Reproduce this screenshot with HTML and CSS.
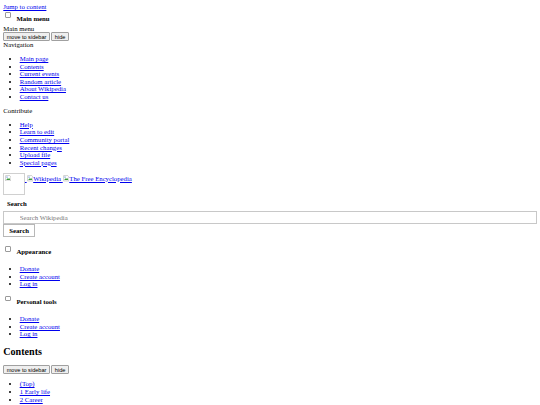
FILE: index.html
```
<!DOCTYPE html>
<html lang="en">
<head>
<meta charset="utf-8">
<title>Wikipedia</title>
<link rel="stylesheet" href="styles.css">
</head>
<body>
<a class="jump-link" href="#content">Jump to content</a>
<div class="dropdown">
  <input type="checkbox" class="dropdown-checkbox" aria-label="Main menu">
  <span class="dropdown-label">Main menu</span>
</div>
<div class="pinnable-header">
  <div>Main menu</div>
  <div class="pin-buttons"><button type="button">move to sidebar</button> <button type="button">hide</button></div>
</div>
<div class="portlet">
  <div class="portlet-heading">Navigation</div>
  <ul>
    <li><a href="#">Main page</a></li>
    <li><a href="#">Contents</a></li>
    <li><a href="#">Current events</a></li>
    <li><a href="#">Random article</a></li>
    <li><a href="#">About Wikipedia</a></li>
    <li><a href="#">Contact us</a></li>
  </ul>
</div>
<div class="portlet">
  <div class="portlet-heading">Contribute</div>
  <ul>
    <li><a href="#">Help</a></li>
    <li><a href="#">Learn to edit</a></li>
    <li><a href="#">Community portal</a></li>
    <li><a href="#">Recent changes</a></li>
    <li><a href="#">Upload file</a></li>
    <li><a href="#">Special pages</a></li>
  </ul>
</div>
<a class="home" href="#"><span class="logo-box"><svg class="broken" viewBox="0 0 16 16"><path d="M1.5 1.5h10l3 3v10h-13z" fill="#fff" stroke="#8a8a8a"/><path d="M3 12l3-4 2 2 2-3 3 5z" fill="#3c9a3c"/><circle cx="5" cy="5" r="1.5" fill="#3b79d8"/></svg></span> <span class="alt-img"><svg class="broken" viewBox="0 0 16 16"><path d="M1.5 1.5h10l3 3v10h-13z" fill="#fff" stroke="#8a8a8a"/><path d="M3 12l3-4 2 2 2-3 3 5z" fill="#3c9a3c"/><circle cx="5" cy="5" r="1.5" fill="#3b79d8"/></svg>Wikipedia</span> <span class="alt-img"><svg class="broken" viewBox="0 0 16 16"><path d="M1.5 1.5h10l3 3v10h-13z" fill="#fff" stroke="#8a8a8a"/><path d="M3 12l3-4 2 2 2-3 3 5z" fill="#3c9a3c"/><circle cx="5" cy="5" r="1.5" fill="#3b79d8"/></svg>The Free Encyclopedia</span></a>
<form class="search" action="#">
  <div class="search-heading">Search</div>
  <input class="search-input" type="search" placeholder="Search Wikipedia" aria-label="Search Wikipedia">
  <button class="search-button" type="submit">Search</button>
</form>
<div class="dropdown">
  <input type="checkbox" class="dropdown-checkbox" aria-label="Appearance">
  <span class="dropdown-label">Appearance</span>
</div>
<ul>
  <li><a href="#">Donate</a></li>
  <li><a href="#">Create account</a></li>
  <li><a href="#">Log in</a></li>
</ul>
<div class="dropdown">
  <input type="checkbox" class="dropdown-checkbox" aria-label="Personal tools">
  <span class="dropdown-label">Personal tools</span>
</div>
<ul>
  <li><a href="#">Donate</a></li>
  <li><a href="#">Create account</a></li>
  <li><a href="#">Log in</a></li>
</ul>
<h2 id="content" class="toc-title">Contents</h2>
<div class="pin-buttons"><button type="button">move to sidebar</button> <button type="button">hide</button></div>
<ul>
  <li><a href="#">(Top)</a></li>
  <li><a href="#">1 Early life</a></li>
  <li><a href="#">2 Career</a></li>
</ul>
</body>
</html>
```

FILE: styles.css
```
body {
  margin: 3.28px;
  font-family: "Liberation Serif", "Times New Roman", serif;
  font-size: 6.75px;
  line-height: 7.54px;
  color: #000;
  background: #fff;
}
a {
  color: #0000ee;
}
ul {
  margin: 6.56px 0;
  padding-left: 16.4px;
}
.dropdown {
  display: flex;
  align-items: flex-start;
}
.dropdown-checkbox {
  appearance: none;
  box-sizing: border-box;
  margin: 1.3px 1.2px 1.2px 1.7px;
  width: 5.6px;
  height: 5.6px;
  border: 0.6px solid #9a9a9a;
  border-radius: 1px;
  background: #fff;
}
.dropdown-label {
  font-weight: bold;
  margin: 3.7px 0 2.9px 4.7px;
}
.pin-buttons {
  display: flex;
  gap: 1.6px;
}
.pin-buttons button {
  box-sizing: border-box;
  height: 8.4px;
  margin: 0;
  padding: 0 2.4px;
  border: 1px solid #a0a0a0;
  border-radius: 1px;
  background: #efefef;
  color: #000;
  font-family: "Liberation Sans", Arial, sans-serif;
  font-size: 5.6px;
  line-height: 6px;
}
.home {
  display: block;
  padding-top: 0.6px;
}
.logo-box {
  display: inline-block;
  box-sizing: border-box;
  width: 21.7px;
  height: 21.3px;
  border: 1px solid #d0d0d0;
  padding: 0.6px;
}
.broken {
  width: 6.56px;
  height: 6.56px;
  display: inline-block;
  vertical-align: top;
}
.alt-img .broken {
  vertical-align: -0.8px;
}
.search {
  margin: 0 0 7.4px;
}
.search-heading {
  font-weight: bold;
  margin: 4.9px 0 3.9px 3.7px;
}
.search-input {
  display: block;
  box-sizing: border-box;
  width: 100%;
  height: 13.2px;
  margin: 0;
  padding: 0 0 0 15.6px;
  border: 1px solid #c8c8c8;
  font-family: "Liberation Serif", serif;
  font-size: 6.75px;
  outline: none;
}
.search-input::placeholder {
  color: #777;
}
.search-button {
  display: block;
  box-sizing: border-box;
  height: 13.2px;
  margin: 0;
  padding: 0 4.9px;
  border: 1px solid #b8b8b8;
  background: #fff;
  font-family: "Liberation Serif", serif;
  font-size: 6.75px;
  font-weight: bold;
  color: #000;
}
.toc-title {
  font-size: 10.1px;
  line-height: 11.3px;
  margin: 8.17px 0;
}
```
